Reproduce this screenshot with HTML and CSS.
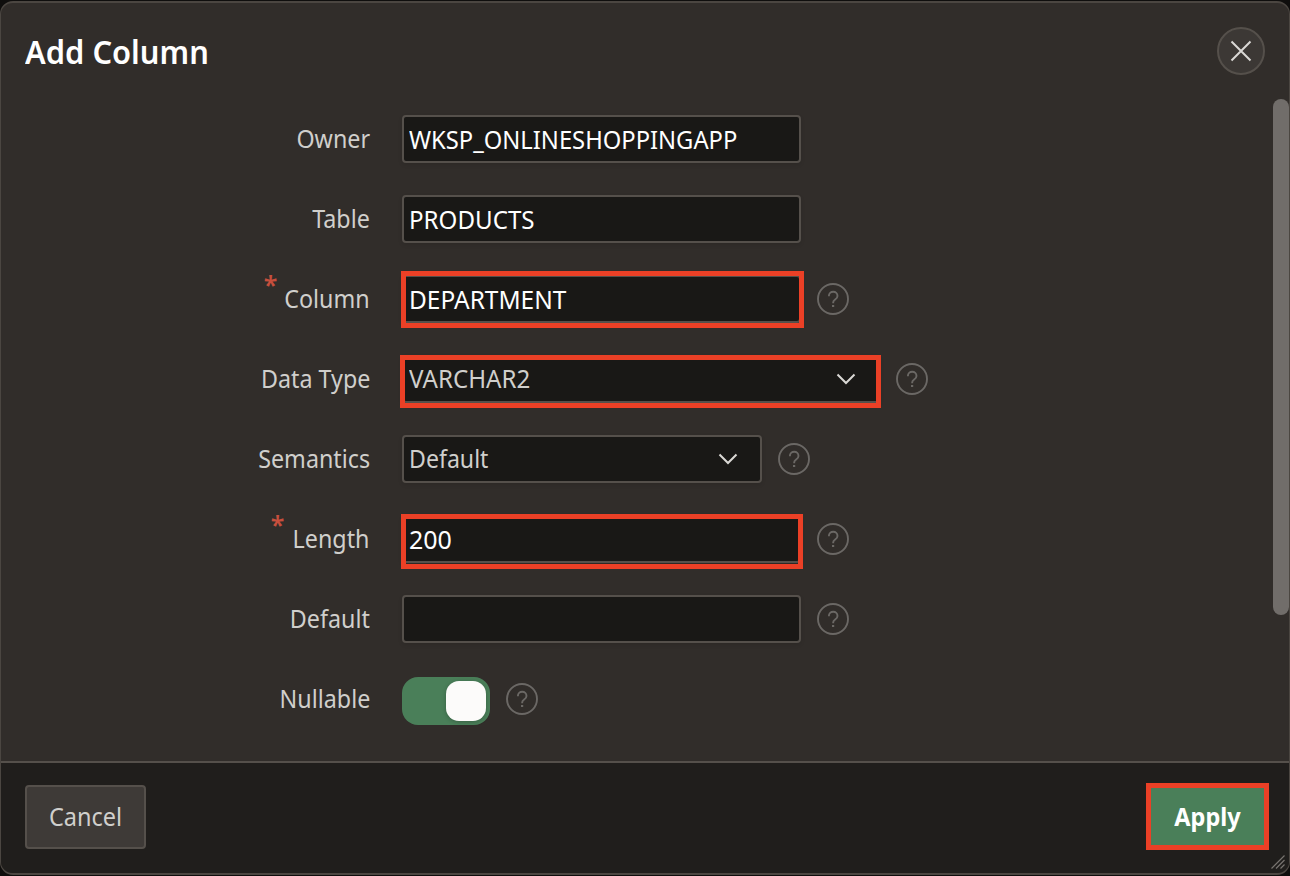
FILE: index.html
```
<!DOCTYPE html>
<html lang="en">
<head>
<meta charset="utf-8">
<title>Add Column</title>
<link rel="stylesheet" href="styles.css">
</head>
<body>
<svg class="defs" aria-hidden="true">
  <symbol id="help" viewBox="0 0 32 32">
    <circle cx="16" cy="16" r="15" fill="none" stroke="currentColor" stroke-width="1.900"/>
    <path d="M11.900 13.200V12.900a4.300 4.100 0 0 1 8.600 0c0 3.500-4.300 3.500-4.300 6.300v1" fill="none" stroke="currentColor" stroke-width="1.900"/>
    <rect x="15" y="22" width="2.200" height="2" fill="currentColor"/>
  </symbol>
  <symbol id="chevron" viewBox="0 0 20 12">
    <path d="M1.500 1.500 10 10l8.500-8.500" fill="none" stroke="currentColor" stroke-width="2"/>
  </symbol>
</svg>
<div class="dialog" role="dialog">
  <header class="header">
    <h1 class="title">Add Column</h1>
    <button class="close" aria-label="Close"><svg width="22" height="22" viewBox="0 0 22 22"><path d="M1.500 1.500l19 19M20.500 1.500l-19 19" stroke="#dad8d5" stroke-width="2"/></svg></button>
  </header>
  <main class="body">
    <div class="row"><div class="label"><span>Owner</span></div><div class="field"><span class="t-wksp">WKSP_ONLINESHOPPINGAPP</span></div></div>
    <div class="row"><div class="label"><span>Table</span></div><div class="field"><span>PRODUCTS</span></div></div>
    <div class="row"><div class="label"><i class="req">*</i><span>Column</span></div><div class="field"><span class="t-dept">DEPARTMENT</span><b class="mark mark-column"></b></div><svg class="help"><use href="#help"/></svg></div>
    <div class="row"><div class="label"><span>Data Type</span></div><div class="field select wide"><span>VARCHAR2</span><svg class="chev"><use href="#chevron"/></svg><b class="mark mark-type"></b></div><svg class="help"><use href="#help"/></svg></div>
    <div class="row"><div class="label"><span>Semantics</span></div><div class="field select narrow"><span class="t-default">Default</span><svg class="chev"><use href="#chevron"/></svg></div><svg class="help"><use href="#help"/></svg></div>
    <div class="row"><div class="label"><i class="req req-length">*</i><span>Length</span></div><div class="field"><span class="t-200">200</span><b class="mark mark-length"></b></div><svg class="help"><use href="#help"/></svg></div>
    <div class="row"><div class="label"><span>Default</span></div><div class="field"></div><svg class="help"><use href="#help"/></svg></div>
    <div class="row"><div class="label"><span>Nullable</span></div><div class="toggle"><div class="thumb"></div></div><svg class="help"><use href="#help"/></svg></div>
    <div class="scrollbar"></div>
  </main>
  <footer class="footer">
    <button class="btn"><span>Cancel</span></button>
    <button class="btn apply"><span>Apply</span><b class="mark mark-apply"></b></button>
    <svg class="grip" width="16" height="16" viewBox="0 0 16 16"><path d="M1.500 14.500l13-13M6 14.500l8.500-8.500M10.500 14.500l4-4" stroke="#77736f" stroke-width="1.200"/></svg>
  </footer>
</div>
</body>
</html>
```
FILE: styles.css
```
* { box-sizing: border-box; }
body { margin: 0; padding-top: 1px; background: #0f0e0d; font-family: "Noto Sans", sans-serif; height: 876px; overflow: hidden; }
.defs { display: none; }
.dialog { width: 1290px; height: 874px; border: 2px solid #4b4641; border-left-width: 1px; border-right-width: 1px; border-radius: 13px; overflow: hidden; background: #312d2a; display: flex; flex-direction: column; }
.header { display: flex; justify-content: space-between; align-items: flex-start; padding: 24px 24px 0; height: 96px; flex: none; }
.title { margin: 3px 0 0; font-size: 33px; line-height: 44px; font-weight: 600; color: #fff; white-space: nowrap; transform: scaleX(.935); transform-origin: left; }
.close { width: 48px; height: 48px; padding: 0; border-radius: 50%; border: 2px solid #55504b; background: #3c3835; display: flex; align-items: center; justify-content: center; }
.body { position: relative; height: 662px; flex: none; padding: 16px 0 0; }
.row { display: flex; height: 48px; margin-bottom: 32px; font-size: 25px; line-height: 44px; color: #d0cfcc; }
.label { width: 369px; margin-right: 32px; display: flex; justify-content: flex-end; line-height: 47px; white-space: nowrap; }
.label span { transform: scaleX(.932); transform-origin: right; }
.req { font-style: normal; font-weight: 600; color: #c74f3d; font-size: 25px; line-height: 19px; margin-right: 1px; }
.req-length { margin-right: 3px; }
.field { position: relative; width: 399px; height: 48px; border: 2px solid #55504b; border-radius: 4px; background: #191816; padding: 0 5px; color: #fff; box-shadow: 0 2px 4px rgba(0,0,0,.1); white-space: nowrap; }
.field span { display: inline-block; transform: scaleX(.965); transform-origin: left; }
.field .t-wksp { transform: scaleX(.95); }
.field .t-dept { transform: scaleX(.978); }
.field .t-default { transform: scaleX(.925); }
.field .t-200 { transform: none; }
.select { display: flex; justify-content: space-between; align-items: center; color: #d0cfcc; padding-right: 22px; line-height: 43px; }
.select span { align-self: flex-start; }
.wide { width: 478px; }
.narrow { width: 360px; }
.chev { width: 20px; height: 12px; color: #dad8d5; }
.help { width: 32px; height: 32px; margin: 8px 0 0 16px; color: #6b6865; }
.mark { position: absolute; border: 5px solid #eb4026; }
.mark-column { left: -3px; top: -6px; width: 403px; height: 57px; }
.mark-type { left: -4px; top: -2px; width: 481px; height: 53px; }
.mark-length { left: -3px; top: -3px; width: 402px; height: 55px; }
.toggle { width: 88px; height: 48px; margin-top: 2px; padding: 4px; border-radius: 16px; background: #4a7f59; display: flex; justify-content: flex-end; }
.thumb { width: 40px; height: 40px; border-radius: 13px; background: #fcfbfa; box-shadow: 0 1px 4px rgba(0,0,0,.25); }
.scrollbar { position: absolute; right: 0; top: 0; width: 16px; height: 516px; border-radius: 8px; background: #716d6a; }
.footer { position: relative; flex: 1; display: flex; justify-content: space-between; align-items: flex-start; padding: 22px 24px 0; border-top: 2px solid #55504b; background: #201e1c; }
.btn { position: relative; width: 121px; height: 64px; padding: 0; border: 2px solid #55504b; border-radius: 4px; background: #3e3a37; color: #d0cfcc; font: 25px/58px "Noto Sans", sans-serif; }
.btn span { display: block; height: 60px; transform: scaleX(.94); }
.apply { width: 117px; border-color: #4a7f59; background: #4a7f59; color: #fff; font-weight: 700; }
.apply span { margin-left: 2px; }
.mark-apply { left: -4px; top: -4px; width: 123px; height: 67px; }
.grip { position: absolute; right: 3px; bottom: 3px; }
```
